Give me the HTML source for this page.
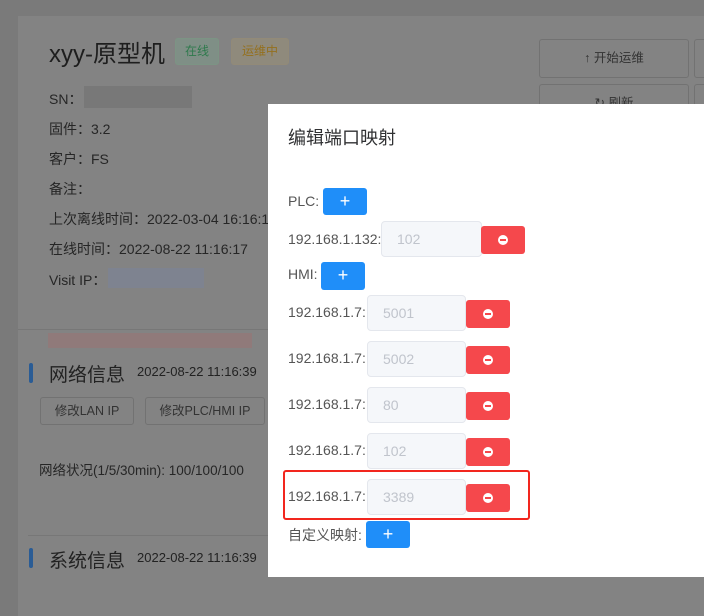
<!DOCTYPE html>
<html><head><meta charset="utf-8"><style>
*{margin:0;padding:0;box-sizing:border-box}
body{width:704px;height:586px;overflow:hidden;background:#7a7a7a;font-family:"Liberation Sans","Noto Sans CJK SC",sans-serif;position:relative;color:#2c2c2c}
.a{position:absolute;white-space:nowrap}
.card{position:absolute;left:18px;top:16px;width:700px;height:600px;background:#838383}
.t{font-size:14px;color:#262626}
.btn{position:absolute;border:1px solid #727272;border-radius:3px;font-size:12.5px;color:#333;text-align:center}
.modal{position:absolute;left:268px;top:104px;width:440px;height:473px;background:#fff}
.m{font-size:14px;color:#555}
.inp{position:absolute;width:99px;height:36px;background:#f5f7fa;border:1px solid #e4e7ed;border-radius:4px;font-size:14px;color:#c0c4cc;padding-left:15px;line-height:34px}
.red{position:absolute;width:44px;height:28px;background:#f5484c;border-radius:3px}
.red::after{content:"";position:absolute;left:17px;top:9px;width:10px;height:10px;border-radius:50%;background:#fff}
.red::before{content:"";position:absolute;left:19px;top:13px;width:6px;height:2px;background:#f5484c;z-index:1}
.blue{position:absolute;width:44px;height:27px;background:#1f8ef9;border-radius:3px;color:#fff;font-size:18px;text-align:center;line-height:26px}
</style></head><body>
<div class="card"></div>
<div class="a" style="left:49px;top:34px;font-size:24px;color:#1e1e1e">xyy-原型机</div>
<div class="a" style="left:175px;top:38px;width:44px;height:27px;background:#7f8f86;border:1px solid #7c9484;border-radius:3px;color:#2e7a4c;font-size:12px;text-align:center;line-height:25px">在线</div>
<div class="a" style="left:231px;top:38px;width:58px;height:27px;background:#8f8a7c;border:1px solid #928a78;border-radius:3px;color:#94701e;font-size:12px;text-align:center;line-height:25px">运维中</div>
<div class="a t" style="left:49px;top:89px">SN：</div>
<div class="a" style="left:84px;top:86px;width:108px;height:22px;background:#787878"></div>
<div class="a t" style="left:49px;top:119px">固件：3.2</div>
<div class="a t" style="left:49px;top:149px">客户：FS</div>
<div class="a t" style="left:49px;top:179px">备注：</div>
<div class="a t" style="left:49px;top:209px">上次离线时间：2022-03-04 16:16:1</div>
<div class="a t" style="left:49px;top:239px">在线时间：2022-08-22 11:16:17</div>
<div class="a t" style="left:49px;top:270px">Visit IP：</div>
<div class="a" style="left:108px;top:268px;width:96px;height:20px;background:#7e8390"></div>
<div class="a" style="left:18px;top:329px;width:260px;height:1px;background:#777"></div>
<div class="a" style="left:48px;top:333px;width:204px;height:15px;background:#907a7a"></div>
<div class="a" style="left:29px;top:363px;width:4px;height:20px;background:#2a5c95;border-radius:2px"></div>
<div class="a" style="left:49px;top:360px;font-size:19px;color:#222">网络信息</div>
<div class="a" style="left:137px;top:364px;font-size:13px;color:#222">2022-08-22 11:16:39</div>
<div class="btn" style="left:40px;top:397px;width:94px;height:28px;line-height:26px">修改LAN IP</div>
<div class="btn" style="left:145px;top:397px;width:120px;height:28px;line-height:26px">修改PLC/HMI IP</div>
<div class="a" style="left:39px;top:459px;font-size:13.5px;color:#262626">网络状况(1/5/30min): 100/100/100</div>
<div class="a" style="left:28px;top:535px;width:250px;height:1px;background:#777"></div>
<div class="a" style="left:29px;top:548px;width:4px;height:20px;background:#2a5c95;border-radius:2px"></div>
<div class="a" style="left:49px;top:546px;font-size:19px;color:#222">系统信息</div>
<div class="a" style="left:137px;top:550px;font-size:13px;color:#222">2022-08-22 11:16:39</div>
<div class="btn" style="left:539px;top:39px;width:150px;height:39px;line-height:37px">↑ 开始运维</div>
<div class="btn" style="left:694px;top:39px;width:40px;height:39px"></div>
<div class="btn" style="left:539px;top:84px;width:150px;height:39px;line-height:37px">↻ 刷新</div>
<div class="btn" style="left:694px;top:84px;width:40px;height:39px"></div>
<div class="modal"></div>
<div class="a" style="left:288px;top:124px;font-size:18px;color:#303133">编辑端口映射</div>
<div class="a m" style="left:288px;top:193px">PLC:</div>
<div class="blue" style="left:323px;top:188px">+</div>
<div class="a m" style="left:288px;top:231px">192.168.1.132:</div>
<div class="inp" style="left:381px;top:221px;width:101px">102</div>
<div class="red" style="left:481px;top:226px"></div>
<div class="a m" style="left:288px;top:266px">HMI:</div>
<div class="blue" style="left:321px;top:262px;height:28px">+</div>
<div class="a m" style="left:288px;top:304px">192.168.1.7:</div>
<div class="inp" style="left:367px;top:295px">5001</div>
<div class="red" style="left:466px;top:300px"></div>
<div class="a m" style="left:288px;top:350px">192.168.1.7:</div>
<div class="inp" style="left:367px;top:341px">5002</div>
<div class="red" style="left:466px;top:346px"></div>
<div class="a m" style="left:288px;top:396px">192.168.1.7:</div>
<div class="inp" style="left:367px;top:387px">80</div>
<div class="red" style="left:466px;top:392px"></div>
<div class="a m" style="left:288px;top:442px">192.168.1.7:</div>
<div class="inp" style="left:367px;top:433px">102</div>
<div class="red" style="left:466px;top:438px"></div>
<div class="a m" style="left:288px;top:488px">192.168.1.7:</div>
<div class="inp" style="left:367px;top:479px">3389</div>
<div class="red" style="left:466px;top:484px"></div>
<div class="a" style="left:283px;top:470px;width:247px;height:50px;border:2px solid #f2261e;border-radius:3px"></div>
<div class="a m" style="left:288px;top:525px">自定义映射:</div>
<div class="blue" style="left:366px;top:521px">+</div>
</body></html>
